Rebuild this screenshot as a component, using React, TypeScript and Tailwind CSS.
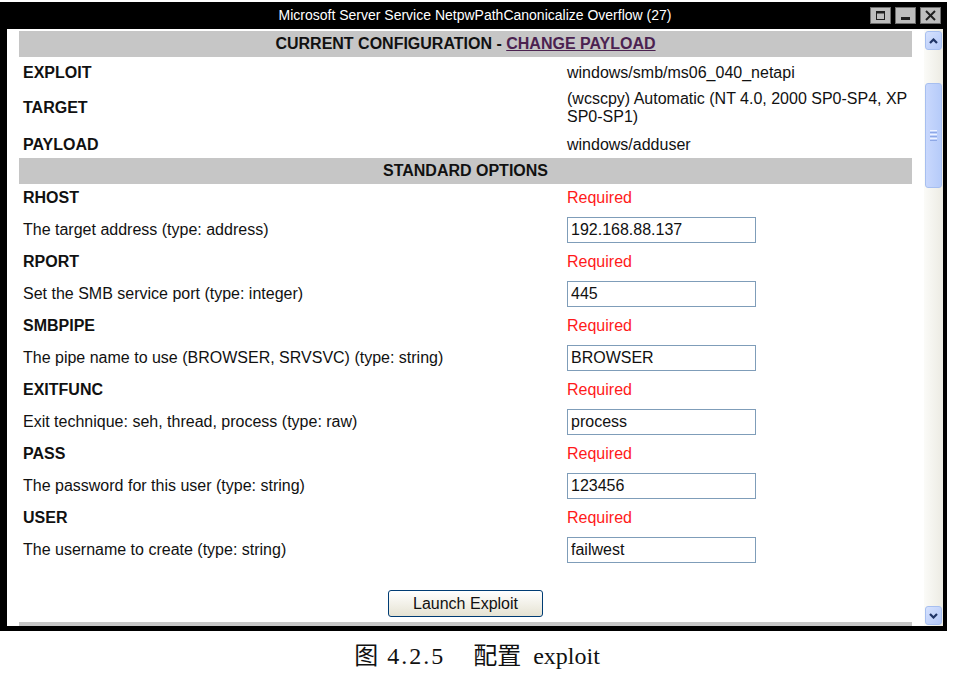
import React from 'react';

const CONFIG_ROWS = [
  { label: 'EXPLOIT', value: 'windows/smb/ms06_040_netapi', rowClass: 'h-[31px]' },
  { label: 'TARGET', value: '(wcscpy) Automatic (NT 4.0, 2000 SP0-SP4, XP SP0-SP1)', rowClass: 'h-[40px]' },
  { label: 'PAYLOAD', value: 'windows/adduser', rowClass: 'h-[30px] pt-[3px]' },
];

const OPTIONS = [
  { name: 'RHOST', desc: 'The target address (type: address)', value: '192.168.88.137' },
  { name: 'RPORT', desc: 'Set the SMB service port (type: integer)', value: '445' },
  { name: 'SMBPIPE', desc: 'The pipe name to use (BROWSER, SRVSVC) (type: string)', value: 'BROWSER' },
  { name: 'EXITFUNC', desc: 'Exit technique: seh, thread, process (type: raw)', value: 'process' },
  { name: 'PASS', desc: 'The password for this user (type: string)', value: '123456' },
  { name: 'USER', desc: 'The username to create (type: string)', value: 'failwest' },
];

function WinButton({ kind }: { kind: 'max' | 'min' | 'close' }) {
  return (
    <div className="w-[21px] h-[17px] bg-[#bdbdbd] border border-[#6e6e6e] flex items-center justify-center">
      <svg width="13" height="11" viewBox="0 0 13 11">
        {kind === 'max' && (
          <g fill="none" stroke="#1e1e1e">
            <rect x="2.5" y="1.5" width="8" height="8" />
            <line x1="2" y1="2.5" x2="11" y2="2.5" strokeWidth="2" />
          </g>
        )}
        {kind === 'min' && <rect x="2" y="7" width="9" height="3" fill="#1e1e1e" />}
        {kind === 'close' && (
          <g stroke="#1e1e1e" strokeWidth="2">
            <line x1="2" y1="1" x2="11" y2="10" />
            <line x1="11" y1="1" x2="2" y2="10" />
          </g>
        )}
      </svg>
    </div>
  );
}

function ScrollArrow({ up }: { up?: boolean }) {
  return (
    <div className="mx-[1px] h-[19px] rounded-[3px] border border-[#a7bff0] bg-linear-to-br from-[#d6e2fe] to-[#b3c8f8] flex items-center justify-center">
      <svg width="9" height="6" viewBox="0 0 9 6">
        <path
          d={up ? 'M1 5 L4.5 1.5 L8 5' : 'M1 1 L4.5 4.5 L8 1'}
          fill="none"
          stroke="#1f3466"
          strokeWidth="2.2"
        />
      </svg>
    </div>
  );
}

function SectionBar({ children }: { children: React.ReactNode }) {
  return (
    <div className="h-[26px] bg-[#c6c6c6] flex items-center justify-center text-[16px] font-bold text-[#111]">
      {children}
    </div>
  );
}

export default function App() {
  return (
    <div
      className="w-[954px] h-[678px] bg-white overflow-hidden"
      style={{ fontFamily: '"Liberation Sans", Arial, sans-serif' }}
    >
      {/* Window frame */}
      <div className="mt-[2px] w-[947px] bg-black pl-[7px] pr-[4px] pb-[5px]">
        {/* Title bar */}
        <div className="h-[27px] grid grid-cols-[80px_1fr_80px] items-center">
          <div />
          <div className="text-center text-white text-[14px]">
            Microsoft Server Service NetpwPathCanonicalize Overflow (27)
          </div>
          <div className="flex justify-end gap-[4px] pr-[2px]">
            <WinButton kind="max" />
            <WinButton kind="min" />
            <WinButton kind="close" />
          </div>
        </div>

        {/* Client area */}
        <div className="h-[597px] bg-white flex">
          <div className="flex-1 overflow-hidden px-[12px] pt-[2px] text-[16px] text-[#111]">
            <SectionBar>
              CURRENT CONFIGURATION -&nbsp;
              <span className="underline text-[#4b2250]">CHANGE PAYLOAD</span>
            </SectionBar>

            {CONFIG_ROWS.map((row) => (
              <div key={row.label} className={`flex items-center ${row.rowClass}`}>
                <div className="w-[544px] pl-[4px] font-bold">{row.label}</div>
                <div className="flex-1 pl-[4px] leading-[18px]">{row.value}</div>
              </div>
            ))}

            <SectionBar>STANDARD OPTIONS</SectionBar>

            {OPTIONS.map((opt) => (
              <div key={opt.name}>
                <div className="h-[28px] flex items-center">
                  <div className="w-[544px] pl-[4px] font-bold">{opt.name}</div>
                  <div className="flex-1 pl-[4px] text-[#ff1a1a]">Required</div>
                </div>
                <div className="h-[36px] flex items-center">
                  <div className="w-[544px] pl-[4px]">{opt.desc}</div>
                  <div className="flex-1 pl-[4px]">
                    <input
                      readOnly
                      value={opt.value}
                      className="w-[189px] h-[26px] border border-[#7f9db9] px-[3px] text-[16px] text-[#111] outline-none"
                    />
                  </div>
                </div>
              </div>
            ))}

            <div className="mt-[22px] flex justify-center">
              <button className="w-[155px] h-[27px] rounded-[3px] border border-[#003c74] bg-linear-to-b from-white to-[#e6e3d3] text-[16px] text-[#111]">
                Launch Exploit
              </button>
            </div>

            <div className="mt-[5px] h-[26px] bg-[#c6c6c6]" />
          </div>

          {/* Scrollbar */}
          <div className="w-[19px] flex flex-col bg-linear-to-r from-[#fbfbf8] to-[#ecebe3]">
            <div className="mt-[2px]">
              <ScrollArrow up />
            </div>
            <div className="h-[33px]" />
            <div className="mx-[1px] h-[105px] rounded-[3px] border border-[#a7bff0] bg-linear-to-r from-[#c9d8fd] to-[#b6cbf9] flex flex-col items-center justify-center gap-[1px]">
              <div className="w-[7px] h-[1px] bg-[#eef3ff]" />
              <div className="w-[7px] h-[1px] bg-[#8ea8e6]" />
              <div className="w-[7px] h-[1px] bg-[#eef3ff]" />
              <div className="w-[7px] h-[1px] bg-[#8ea8e6]" />
              <div className="w-[7px] h-[1px] bg-[#eef3ff]" />
              <div className="w-[7px] h-[1px] bg-[#8ea8e6]" />
            </div>
            <div className="flex-1" />
            <div className="mb-[1px]">
              <ScrollArrow />
            </div>
          </div>
        </div>
      </div>

      {/* Caption */}
      <div
        className="mt-[10px] flex justify-center items-baseline text-[24px] leading-[30px] text-[#111]"
        style={{ fontFamily: '"Liberation Serif", "Noto Sans CJK SC", serif' }}
      >
        <span>图</span>
        <span className="ml-[9px] tracking-[2px]">4.2.5</span>
        <span className="ml-[28px]">配置</span>
        <span className="ml-[12px]">exploit</span>
      </div>
    </div>
  );
}
